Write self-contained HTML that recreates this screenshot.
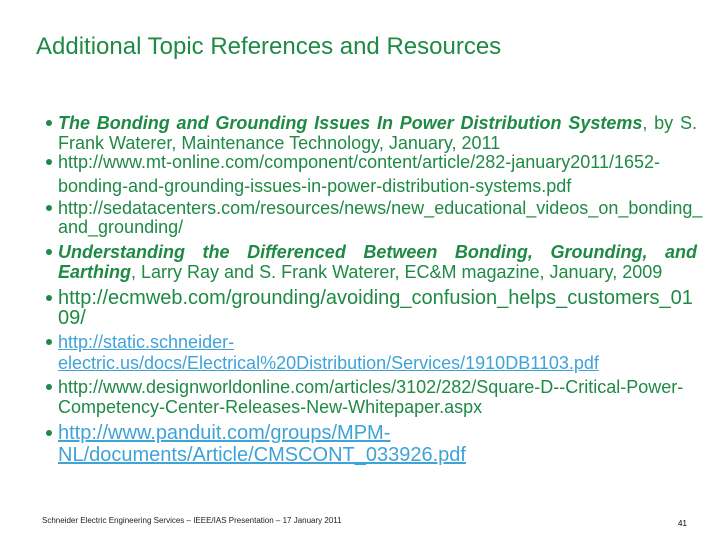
<!DOCTYPE html>
<html><head><meta charset="utf-8"><style>
body{margin:0;width:720px;height:540px;background:#fff;position:relative;overflow:hidden;font-family:"Liberation Sans",sans-serif;color:#1e8a44}
.l{position:absolute;left:58px;white-space:nowrap;font-size:18px;line-height:20px}
.j{width:639px;text-align:justify;text-align-last:justify;white-space:normal}
.b{position:absolute;left:46px;width:6px;height:6px;border-radius:50%;background:#1e8a44}
.big{font-size:20px;line-height:22px}
.u{color:#3fa3d8;text-decoration:underline}
i b,b i{font-weight:bold}
</style></head><body>
<div style="position:absolute;left:36px;top:33px;font-size:24px;line-height:28px;color:#1e8a44">Additional Topic References and Resources</div>

<div class="b" style="top:120px"></div>
<div class="l j" style="top:113px"><b><i>The Bonding and Grounding Issues In Power Distribution Systems</i></b>, by S.</div>
<div class="l" style="top:133px">Frank Waterer, Maintenance Technology, January, 2011</div>
<div class="b" style="top:159px"></div>
<div class="l" style="top:152px">http://www.mt-online.com/component/content/article/282-january2011/1652-</div>
<div class="l" style="top:176px">bonding-and-grounding-issues-in-power-distribution-systems.pdf</div>
<div class="b" style="top:205px"></div>
<div class="l" style="top:198px">http://sedatacenters.com/resources/news/new_educational_videos_on_bonding_</div>
<div class="l" style="top:217px">and_grounding/</div>
<div class="b" style="top:249px"></div>
<div class="l j" style="top:242px"><b><i>Understanding the Differenced Between Bonding, Grounding, and</i></b></div>
<div class="l" style="top:262px"><b><i>Earthing</i></b>, Larry Ray and S. Frank Waterer, EC&amp;M magazine, January, 2009</div>
<div class="b" style="top:295px"></div>
<div class="l big" style="top:287px">http://ecmweb.com/grounding/avoiding_confusion_helps_customers_01</div>
<div class="l big" style="top:307px">09/</div>
<div class="b" style="top:339px"></div>
<div class="l u" style="top:332px">http://static.schneider-</div>
<div class="l u" style="top:353px">electric.us/docs/Electrical%20Distribution/Services/1910DB1103.pdf</div>
<div class="b" style="top:384px"></div>
<div class="l" style="top:377px">http://www.designworldonline.com/articles/3102/282/Square-D--Critical-Power-</div>
<div class="l" style="top:397px">Competency-Center-Releases-New-Whitepaper.aspx</div>
<div class="b" style="top:430px"></div>
<div class="l big u" style="top:422px">http://www.panduit.com/groups/MPM-</div>
<div class="l big u" style="top:444px">NL/documents/Article/CMSCONT_033926.pdf</div>

<div style="position:absolute;left:42px;top:516px;font-size:8px;color:#222">Schneider Electric Engineering Services – IEEE/IAS Presentation – 17 January 2011</div>
<div style="position:absolute;left:678px;top:519px;font-size:8px;color:#000">41</div>
</body></html>
